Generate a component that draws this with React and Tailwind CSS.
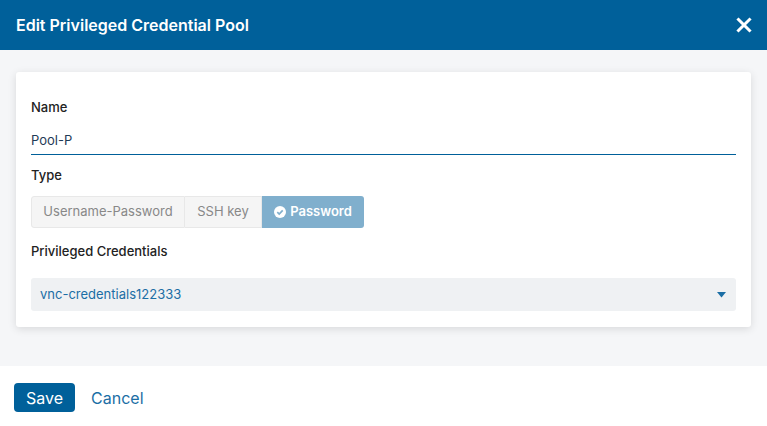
import React from "react";

export default function App() {
  return (
    <div className="w-[767px] h-[426px] flex flex-col bg-white" style={{ fontFamily: "Inter, 'Noto Sans', sans-serif" }}>
      <div className="h-[50px] shrink-0 bg-[#00609a] flex items-center justify-between pl-4 pr-[15px]">
        <div className="text-white text-[16px] font-semibold">Edit Privileged Credential Pool</div>
        <svg width="16" height="16" viewBox="0 0 16 16">
          <path d="M2.5 2.5 L13.5 13.5 M13.5 2.5 L2.5 13.5" stroke="white" strokeWidth="3" strokeLinecap="square" />
        </svg>
      </div>
      <div className="h-[316px] shrink-0 bg-[#f5f6f8] px-4 pt-[22px]">
        <div className="bg-white rounded-[3px] shadow-[0_2px_8px_rgba(0,0,0,0.12)] h-[255px] px-[15px] pt-[27px]">
          <div className="text-[13px] font-medium text-[#222] leading-4">Name</div>
          <div className="mt-[17px] border-b border-[#00609a] pb-[6px] text-[13px] text-[#1f3b57] leading-4">Pool-P</div>
          <div className="mt-[12px] text-[13px] font-medium text-[#222] leading-4">Type</div>
          <div className="mt-[13px] flex h-[32px] text-[13px]">
            <div className="w-[154px] flex items-center justify-center bg-[#f5f5f5] border border-[#e8e8e8] rounded-l-[3px] text-[#888]">Username-Password</div>
            <div className="w-[77px] flex items-center justify-center bg-[#f5f5f5] border-y border-r border-[#e8e8e8] text-[#888]">SSH key</div>
            <div className="w-[102px] flex items-center justify-center gap-1 bg-[#80afcd] rounded-r-[3px] text-white font-semibold">
              <svg width="12" height="12" viewBox="0 0 12 12">
                <circle cx="6" cy="6" r="6" fill="white" />
                <path d="M3.3 6.2 L5.2 8 L8.7 4.3" stroke="#80afcd" strokeWidth="1.7" fill="none" />
              </svg>
              Password
            </div>
          </div>
          <div className="mt-[15px] text-[13px] font-medium text-[#222] leading-4">Privileged Credentials</div>
          <div className="mt-[19px] h-[33px] bg-[#eff1f3] rounded-[3px] flex items-center justify-between pl-[9px] pr-[10px]">
            <span className="text-[13px] text-[#1b6ea5]">vnc-credentials122333</span>
            <svg width="9" height="6" viewBox="0 0 9 6">
              <path d="M0 0 H9 L4.5 5.5 Z" fill="#1b6ea5" />
            </svg>
          </div>
        </div>
      </div>
      <div className="flex-1 flex items-center pl-[14px] pt-[3px] gap-4">
        <button className="h-[29px] px-[12px] bg-[#00609a] rounded-[4px] text-white text-[16px]">Save</button>
        <span className="text-[16px] text-[#1b6ea5]">Cancel</span>
      </div>
    </div>
  );
}
